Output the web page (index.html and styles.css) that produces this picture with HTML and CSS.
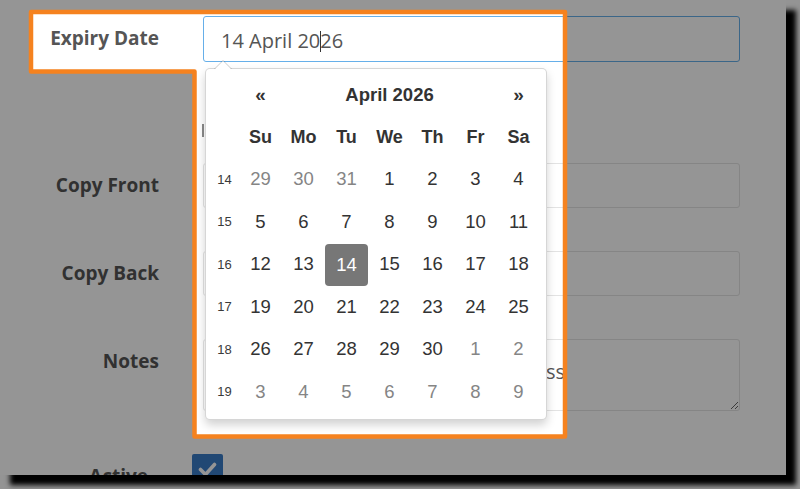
FILE: index.html
```html
<!DOCTYPE html>
<html lang="en">
<head>
<meta charset="utf-8">
<title>Expiry Date</title>
<link rel="stylesheet" href="styles.css">
</head>
<body>
<div class="shot">
  <form class="form">
    <div class="row row-date">
      <label class="lbl">Expiry Date</label>
      <div class="field">
        <input class="ctl" type="text" value="14 April 2026">
        <span class="text-caret"></span>
        <div class="picker">
          <div class="pk-grid">
            <div class="cell"></div>
            <div class="cell nav">«</div>
            <div class="cell title">April 2026</div>
            <div class="cell nav">»</div>

            <div class="cell"></div>
            <div class="cell dow">Su</div><div class="cell dow">Mo</div><div class="cell dow">Tu</div><div class="cell dow">We</div><div class="cell dow">Th</div><div class="cell dow">Fr</div><div class="cell dow">Sa</div>

            <div class="cell wk">14</div>
            <div class="cell d old">29</div><div class="cell d old">30</div><div class="cell d old">31</div><div class="cell d">1</div><div class="cell d">2</div><div class="cell d">3</div><div class="cell d">4</div>

            <div class="cell wk">15</div>
            <div class="cell d">5</div><div class="cell d">6</div><div class="cell d">7</div><div class="cell d">8</div><div class="cell d">9</div><div class="cell d">10</div><div class="cell d">11</div>

            <div class="cell wk">16</div>
            <div class="cell d">12</div><div class="cell d">13</div><div class="cell d sel">14</div><div class="cell d">15</div><div class="cell d">16</div><div class="cell d">17</div><div class="cell d">18</div>

            <div class="cell wk">17</div>
            <div class="cell d">19</div><div class="cell d">20</div><div class="cell d">21</div><div class="cell d">22</div><div class="cell d">23</div><div class="cell d">24</div><div class="cell d">25</div>

            <div class="cell wk">18</div>
            <div class="cell d">26</div><div class="cell d">27</div><div class="cell d">28</div><div class="cell d">29</div><div class="cell d">30</div><div class="cell d old">1</div><div class="cell d old">2</div>

            <div class="cell wk">19</div>
            <div class="cell d old">3</div><div class="cell d old">4</div><div class="cell d old">5</div><div class="cell d old">6</div><div class="cell d old">7</div><div class="cell d old">8</div><div class="cell d old">9</div>
          </div>
        </div>
      </div>
    </div>

    <div class="row-misc"><span class="mark"></span></div>

    <div class="row">
      <label class="lbl">Copy Front</label>
      <div class="field"><input class="ctl" type="text" value=""></div>
    </div>

    <div class="row">
      <label class="lbl">Copy Back</label>
      <div class="field"><input class="ctl" type="text" value=""></div>
    </div>

    <div class="row">
      <label class="lbl">Notes</label>
      <div class="field"><textarea class="ctl area">Double sided, matt finish, no gloss</textarea></div>
    </div>

    <div class="row row-check">
      <label class="lbl">Active</label>
      <div class="field">
        <span class="check">
          <svg width="31" height="31" viewBox="0 0 31 31"><polyline points="8.5,15.5 13.5,20.5 22.5,10.5" fill="none" stroke="#fff" stroke-width="3.6" stroke-linecap="round" stroke-linejoin="round"/></svg>
        </span>
      </div>
    </div>
  </form>

  <svg class="spot" width="786" height="475" viewBox="0 0 786 475">
    <path d="M0 0H786V475H0Z M31 12H565V436.5H194.5V71.5H31Z" fill="rgba(0,0,0,0.416)" fill-rule="evenodd"/>
    <path d="M31 12H565V436.5H194.5V71.5H31Z" fill="none" stroke="#f5821f" stroke-width="4.5" stroke-linejoin="round"/>
  </svg>
</div>
</body>
</html>
```

FILE: styles.css
```css
* { box-sizing: border-box; }

html, body {
  margin: 0;
  padding: 0;
}

body {
  background: #949494;
  width: 800px;
  height: 489px;
  overflow: hidden;
}

.shot {
  position: relative;
  width: 786px;
  height: 475px;
  background: #fff;
  overflow: hidden;
  box-shadow: 10px 10px 5px #000;
  font-family: "Open Sans", sans-serif;
}

.form {
  display: flex;
  flex-direction: column;
  margin: 0;
  padding: 16px 46px 0 0;
}

.row {
  display: flex;
  align-items: flex-start;
  gap: 44px;
  margin-bottom: 43px;
}

.lbl {
  flex: none;
  width: 159px;
  text-align: right;
  font-weight: 700;
  font-size: 19px;
  line-height: 26px;
  padding-top: 9px;
  color: #555;
}

.field {
  flex: 1;
  position: relative;
}

.ctl {
  display: block;
  width: 100%;
  height: 45px;
  margin: 0;
  padding: 0 17px;
  border: 1px solid #e3e3e3;
  border-radius: 3px;
  background: #fff;
  color: #555;
  font: 20px "Open Sans", sans-serif;
  outline: none;
}

.row-date { margin-bottom: 62px; }

.row-date .ctl {
  height: 46px;
  padding-top: 2px;
  border-color: #66afe9;
}

.text-caret {
  position: absolute;
  left: 117px;
  top: 15px;
  width: 1px;
  height: 21px;
  background: #333;
}

.row-misc {
  height: 13px;
  margin-bottom: 26px;
  padding-left: 202px;
}

.mark {
  display: block;
  width: 2px;
  height: 13px;
  background: #8a8a8a;
}

.area {
  height: 72px;
  padding: 18px 12px 6px;
  line-height: 28px;
  text-indent: 29px;
  white-space: nowrap;
  overflow: hidden;
  resize: both;
}

.row-check .lbl { width: 148px; }

.check {
  display: block;
  width: 31px;
  height: 31px;
  background: #3a7bc6;
  border-radius: 2px;
}

.check svg { display: block; }

/* datepicker dropdown */
.picker {
  position: absolute;
  left: 2px;
  top: 52px;
  z-index: 5;
  width: 342px;
  height: 352px;
  padding: 4px 6px 6px 4px;
  background: #fff;
  border: 1px solid rgba(0, 0, 0, 0.16);
  border-radius: 5px;
  box-shadow: 0 5px 10px rgba(0, 0, 0, 0.18);
  font-family: "Liberation Sans", Arial, sans-serif;
  color: #333;
}

.picker::before {
  content: "";
  position: absolute;
  top: -9px;
  left: 8px;
  border-left: 9px solid transparent;
  border-right: 9px solid transparent;
  border-bottom: 9px solid rgba(0, 0, 0, 0.2);
}

.picker::after {
  content: "";
  position: absolute;
  top: -8px;
  left: 9px;
  border-left: 8px solid transparent;
  border-right: 8px solid transparent;
  border-bottom: 8px solid #fff;
}

.pk-grid {
  display: grid;
  grid-template-columns: 29px repeat(7, 43px);
  grid-template-rows: 43px 42px repeat(6, 42.5px);
}

.cell {
  display: flex;
  align-items: center;
  justify-content: center;
  font-size: 18.5px;
}

.nav { font-weight: 700; font-size: 19px; }

.title {
  grid-column: span 5;
  font-weight: 700;
  font-size: 18.5px;
}

.dow { font-weight: 700; font-size: 18px; }

.wk { font-size: 13px; color: #3a3a3a; }

.d { color: #333; }
.d.old { color: #858585; }

.d.sel {
  background: #777;
  color: #fff;
  border-radius: 4px;
  margin: 1px 0 0;
}

/* spotlight overlay */
.spot {
  position: absolute;
  left: 0;
  top: 0;
  z-index: 10;
  pointer-events: none;
}
```
